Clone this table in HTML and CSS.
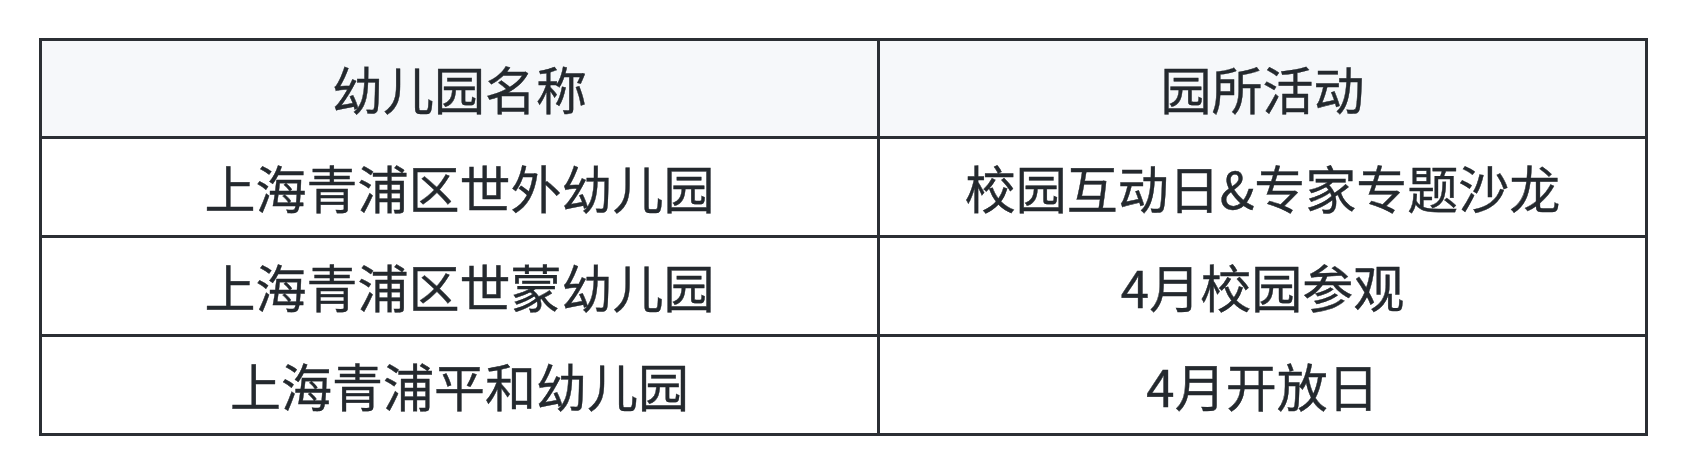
FILE: index.html
```html
<!DOCTYPE html>
<html lang="zh-CN">
<head>
<meta charset="utf-8">
<link rel="stylesheet" href="styles.css">
</head>
<body>
<table class="grid">
  <thead>
    <tr><th class="col-name">幼儿园名称</th><th class="col-act">园所活动</th></tr>
  </thead>
  <tbody>
    <tr><td>上海青浦区世外幼儿园</td><td>校园互动日&amp;专家专题沙龙</td></tr>
    <tr><td>上海青浦区世蒙幼儿园</td><td>4月校园参观</td></tr>
    <tr><td>上海青浦平和幼儿园</td><td>4月开放日</td></tr>
  </tbody>
</table>
</body>
</html>
```

FILE: styles.css
```css
html, body {
  margin: 0;
  padding: 0;
  background: #ffffff;
}
body {
  padding: 38px 0 0 39px;
  font-family: "Noto Sans CJK SC", "Noto Sans", sans-serif;
  color: #24292e;
}
.grid {
  border-collapse: collapse;
  table-layout: fixed;
  width: 1606px;
}
.grid th,
.grid td {
  border: 3px solid #2b2f34;
  height: 96px;
  padding: 0;
  text-align: center;
  vertical-align: middle;
  font-size: 51px;
  font-weight: 400;
  line-height: 1;
  -webkit-text-stroke: 0.4px #24292e;
}
.grid thead th {
  height: 95px;
  background: #f6f8fa;
}
.col-name {
  width: 835px;
}
.col-act {
  width: 765px;
}
```
